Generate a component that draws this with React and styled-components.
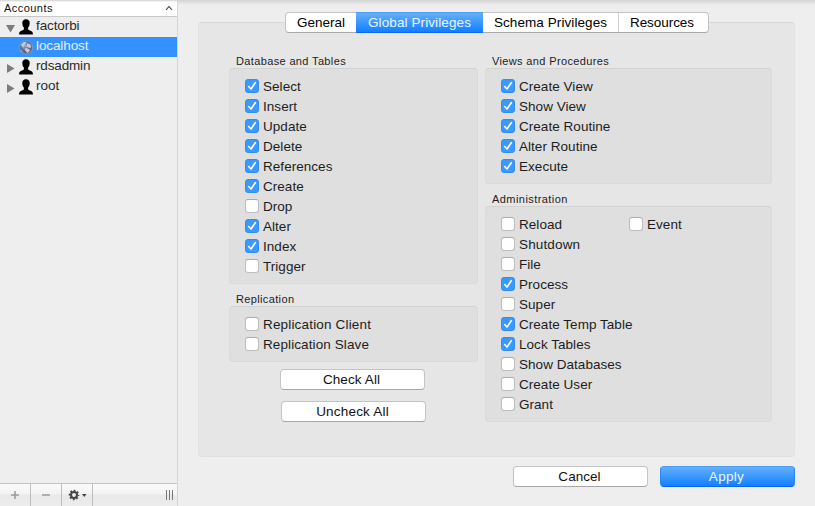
import React from 'react';
import styled, { createGlobalStyle, css } from 'styled-components';

const GlobalStyle = createGlobalStyle`
  * { box-sizing: border-box; }
  body {
    margin: 0;
    background: #eeeeee;
    font-family: "Liberation Sans", Arial, sans-serif;
    font-size: 13.5px;
    color: #1d1d1d;
  }
`;

const Window = styled.div`
  display: flex;
  width: 815px;
  height: 506px;
  overflow: hidden;
  background: linear-gradient(#d4d4d4, #dedede 2px, #eeeeee 5px);
`;

const Sidebar = styled.aside`
  display: flex;
  flex-direction: column;
  width: 178px;
  border-right: 1px solid #d6d6d6;
`;

const ListHeader = styled.div`
  display: flex;
  align-items: center;
  justify-content: space-between;
  height: 17px;
  padding: 0 4px;
  font-size: 11px;
  letter-spacing: 0.45px;
  color: #111;
  background: linear-gradient(#cfcfcf, #ffffff 2px);
  border-bottom: 1px solid #c8c8c8;
`;

const AccountList = styled.div`
  flex: 1;
`;

const AccountRow = styled.div`
  display: flex;
  align-items: center;
  height: 20px;
  color: ${(p) => (p.$selected ? '#e3f0ff' : '#2b2b2b')};
  background: ${(p) => (p.$selected ? '#3392ff' : 'transparent')};
`;

const Disclosure = styled.svg`
  width: 9px;
  height: 9px;
  margin: 2px 3px 0 6px;
`;

const AccountIcon = styled.svg`
  width: 16px;
  height: 16px;
  margin-right: 2px;
`;

const AccountName = styled.span`
  line-height: 16px;
  padding-bottom: 2px;
  letter-spacing: ${(p) => p.$track}px;
`;

const Toolbar = styled.div`
  display: flex;
  height: 23px;
  border-top: 1px solid #c4c4c4;
  background: linear-gradient(#fbfbfb, #f3f3f3 45%, #e9e9e9 50%, #ececec);
`;

const ToolCell = styled.div`
  display: flex;
  align-items: center;
  justify-content: center;
  width: 31px;
  border-right: 1px solid #bdbdbd;
`;

const Grip = styled.div`
  width: 7px;
  height: 10px;
  margin: 6px 4px 0 auto;
  border: solid #777;
  border-width: 0 1px;
  background: linear-gradient(90deg, transparent 2px, #777 2px 3px, transparent 3px);
`;

const Main = styled.main`
  flex: 1;
  display: flex;
  flex-direction: column;
  padding: 12px 20px 0;
`;

const Tabs = styled.div`
  display: flex;
  align-self: flex-start;
  margin-left: 87px;
  height: 21px;
  border-radius: 4px;
  border: 1px solid #c3c3c3;
  border-bottom-color: #a9a9a9;
  background: #fff;
  z-index: 1;
`;

const Tab = styled.div`
  width: ${(p) => p.$w}px;
  text-align: center;
  line-height: 19px;
  color: #000;
  letter-spacing: ${(p) => p.$track}px;
  ${(p) => p.$divider && css`border-left: 1px solid #d2d2d2; padding-right: 3px;`}
  ${(p) =>
    p.$active &&
    css`
      margin: -1px 0;
      line-height: 21px;
      color: #e9f4ff;
      background: linear-gradient(#69b2fa, #0d7dff);
      box-shadow: inset 0 1px #4ba0f5, inset 0 -1px #0a69f5;
    `}
`;

const Panel = styled.section`
  display: flex;
  gap: 7px;
  width: 597px;
  height: 435px;
  margin-top: -11px;
  padding: 31px 0 0 30px;
  background: #e6e6e6;
  border: 1px solid #e1e1e1;
  border-top-color: #d7d7d7;
  border-radius: 4px;
`;

const Column = styled.div`
  display: flex;
  flex-direction: column;
  width: ${(p) => p.$w}px;
`;

const GroupTitle = styled.div`
  height: 14px;
  margin: ${(p) => p.$top || 0}px 0 0 7px;
  line-height: 15px;
  font-size: 11px;
  letter-spacing: ${(p) => p.$track}px;
`;

const GroupBox = styled.div`
  display: flex;
  gap: 7px;
  height: ${(p) => p.$h}px;
  padding: 7px 0 0 15px;
  background: #dfdfdf;
  border: 1px solid #dadada;
  border-top-color: #d2d2d2;
  border-radius: 4px;
`;

const CheckColumn = styled.div`
  width: 121px;
  white-space: nowrap;
`;

const CheckRow = styled.label`
  display: flex;
  align-items: center;
  gap: 4px;
  height: 20px;
  letter-spacing: ${(p) => p.$track}px;
`;

const Box = styled.span`
  display: flex;
  flex: none;
  width: 14px;
  height: 14px;
  border-radius: 3px;
  border: 1px solid #bebebe;
  border-top-color: #acacac;
  background: #fff;
  ${(p) =>
    p.$on &&
    css`
      border-color: #318df2;
      background: #3b99fc;
    `}
`;

const Button = styled.button`
  width: ${(p) => p.$w}px;
  height: 21px;
  padding: 0 2px 0 0;
  border-radius: 4px;
  border: 1px solid #c4c4c4;
  border-bottom-color: #a6a6a6;
  background: #fff;
  color: #111;
  font: inherit;
  line-height: 19px;
  letter-spacing: ${(p) => p.$track}px;
  ${(p) =>
    p.$primary &&
    css`
      color: #f0f7ff;
      border-color: #4a9df5 #2b88f5 #0864f0;
      background: linear-gradient(#69b2fa, #0d7dff) border-box;
    `}
`;

const BulkActions = styled.div`
  display: flex;
  flex-direction: column;
  gap: 11px;
  padding: 7px 0 0 51px;
  button + button { margin-left: 1px; }
`;

const Footer = styled.div`
  display: flex;
  justify-content: flex-end;
  gap: 12px;
  margin: 9px 0 0;
`;

const Person = () => (
  <AccountIcon viewBox="0 0 16 16">
    <path
      d="M8 .3C5.500.3 4.200 2 4.300 4.200 4.350 6 4.900 7.400 5.900 8.500V10.300C5.600 11.200 4.300 11.300 3 11.900 1.500 12.500 1.100 13.400 1 15.500H15C14.900 13.400 14.500 12.500 13 11.900 11.700 11.300 10.400 11.200 10.100 10.300V8.500C11.100 7.400 11.650 6 11.700 4.200 11.800 2 10.500.3 8 .3Z"
      fill="#000"
    />
  </AccountIcon>
);

const Globe = () => (
  <AccountIcon viewBox="0 0 16 16">
    <defs>
      <radialGradient id="globe" cx=".4" cy=".35" r=".65">
        <stop offset="0" stopColor="#8fa0cf" />
        <stop offset=".7" stopColor="#55618c" />
        <stop offset="1" stopColor="#6b7290" />
      </radialGradient>
    </defs>
    <circle cx="8" cy="8.500" r="6.700" fill="url(#globe)" stroke="#a2a6b8" strokeWidth=".6" />
    <path d="M3 5.500 6 3l2.500.5L7.500 5 5.500 6 6 8.500 4.500 8ZM9 4.500l3 .5 1.500 3-1.500 1-2-1.500-1 .5ZM8 9l3 1 1 1.500-2.500 2.500L8 12.500 6.500 10Z" fill="#d9dade" opacity=".85" />
    <path d="M2.500 11 5 13.500M6 6l3 2M12 6l-1.500 3" stroke="#c8c8cc" strokeWidth=".8" />
  </AccountIcon>
);

const Arrow = ({ open }) => (
  <Disclosure viewBox="0 0 9 9">
    <path d={open ? 'M0 1H9L4.500 8.500Z' : 'M1 0V9L8.500 4.500Z'} fill="#7c7c7c" />
  </Disclosure>
);

const Check = ({ label, on, track = 0.04 }) => (
  <CheckRow $track={track}>
    <Box $on={on}>
      {on && (
        <svg width="12" height="12" viewBox="0 0 12 12">
          <path d="M2.700 6.500 5 9 9.300 2.700" fill="none" stroke="#fff" strokeWidth="1.600" strokeLinecap="round" strokeLinejoin="round" />
        </svg>
      )}
    </Box>
    {label}
  </CheckRow>
);

const Checks = ({ items }) => (
  <CheckColumn>
    {items.map(([label, on, track]) => (
      <Check key={label} label={label} on={!!on} track={track} />
    ))}
  </CheckColumn>
);

const tables = [
  ['Select', 1], ['Insert', 1], ['Update', 1], ['Delete', 1], ['References', 1],
  ['Create', 1], ['Drop', 0], ['Alter', 1], ['Index', 1], ['Trigger', 0],
];
const replication = [['Replication Client', 0, 0.17], ['Replication Slave', 0, 0.1]];
const views = [
  ['Create View', 1], ['Show View', 1], ['Create Routine', 1], ['Alter Routine', 1], ['Execute', 1],
];
const admin = [
  ['Reload', 0], ['Shutdown', 0, 0.15], ['File', 0], ['Process', 1], ['Super', 0],
  ['Create Temp Table', 1], ['Lock Tables', 1], ['Show Databases', 0], ['Create User', 0], ['Grant', 0],
];

const Gear = () => (
  <svg width="20" height="12" viewBox="0 0 20 12">
    <circle cx="7" cy="6" r="3" fill="none" stroke="#444" strokeWidth="2" />
    <circle cx="7" cy="6" r="4.500" fill="none" stroke="#444" strokeWidth="1.600" strokeDasharray="1.767 1.767" strokeDashoffset=".88" />
    <path d="M15 5H19.500L17.250 8Z" fill="#444" />
  </svg>
);

export default function App() {
  return (
    <Window>
      <GlobalStyle />
      <Sidebar>
        <ListHeader>
          Accounts
          <svg width="8" height="6" viewBox="0 0 8 6">
            <path d="M1 5 4 1.500 7 5" fill="none" stroke="#333" strokeWidth="1.100" />
          </svg>
        </ListHeader>
        <AccountList>
          <AccountRow><Arrow open /><Person /><AccountName $track={-0.1}>factorbi</AccountName></AccountRow>
          <AccountRow $selected><Disclosure /><Globe /><AccountName $track={-0.1}>localhost</AccountName></AccountRow>
          <AccountRow><Arrow /><Person /><AccountName $track={-0.15}>rdsadmin</AccountName></AccountRow>
          <AccountRow><Arrow /><Person /><AccountName $track={0}>root</AccountName></AccountRow>
        </AccountList>
        <Toolbar>
          <ToolCell>
            <svg width="8" height="8" viewBox="0 0 8 8"><path d="M0 4H8M4 0V8" stroke="#999" strokeWidth="1.500" /></svg>
          </ToolCell>
          <ToolCell>
            <svg width="8" height="8" viewBox="0 0 8 8"><path d="M0 4H8" stroke="#999" strokeWidth="1.500" /></svg>
          </ToolCell>
          <ToolCell><Gear /></ToolCell>
          <Grip />
        </Toolbar>
      </Sidebar>
      <Main>
        <Tabs>
          <Tab $w={70} $track={0.02}>General</Tab>
          <Tab $w={127} $track={0.1} $active>Global Privileges</Tab>
          <Tab $w={135} $track={0.08}>Schema Privileges</Tab>
          <Tab $w={90} $track={-0.05} $divider>Resources</Tab>
        </Tabs>
        <Panel>
          <Column $w={249}>
            <GroupTitle $track={0.36}>Database and Tables</GroupTitle>
            <GroupBox $h={216}><Checks items={tables} /></GroupBox>
            <GroupTitle $top={8} $track={0.36}>Replication</GroupTitle>
            <GroupBox $h={56}><Checks items={replication} /></GroupBox>
            <BulkActions>
              <Button $w={145} $track={0.1}>Check All</Button>
              <Button $w={145} $track={0.2}>Uncheck All</Button>
            </BulkActions>
          </Column>
          <Column $w={287}>
            <GroupTitle $track={0.36}>Views and Procedures</GroupTitle>
            <GroupBox $h={116}><Checks items={views} /></GroupBox>
            <GroupTitle $top={8} $track={0.44}>Administration</GroupTitle>
            <GroupBox $h={216}>
              <Checks items={admin} />
              <Checks items={[['Event', 0]]} />
            </GroupBox>
          </Column>
        </Panel>
        <Footer>
          <Button $w={135} $track={0.05}>Cancel</Button>
          <Button $w={135} $track={0.3} $primary>Apply</Button>
        </Footer>
      </Main>
    </Window>
  );
}
